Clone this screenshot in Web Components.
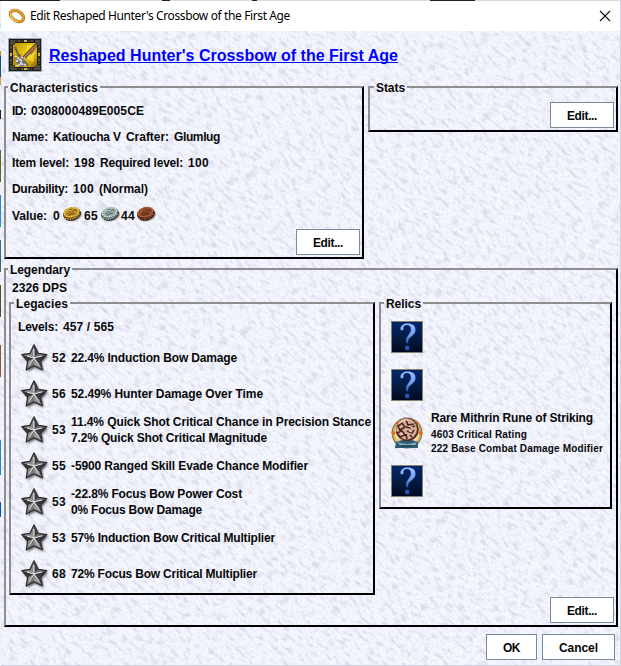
<!DOCTYPE html>
<html lang="en"><head><meta charset="utf-8"><title>Edit Reshaped Hunter's Crossbow of the First Age</title>
<style>html,body{margin:0;height:100%;overflow:hidden}body{font:bold 12px/16px "Liberation Sans",Arial,sans-serif;color:#080808}</style></head>
<body><item-dialog></item-dialog>
<script>
const define = (name, html, ready) => customElements.define(name, class extends HTMLElement {
  connectedCallback() {
    if (this.shadowRoot) return;
    const t = document.createElement('template');
    t.innerHTML = typeof html === 'function' ? html(this) : html;
    this.attachShadow({mode:'open'}).append(t.content.cloneNode(true));
    if (ready) ready(this);
  }
});

/* One line of text, tracked so that it spans the width given in "w". */
define('fit-text', '<style>:host{display:block;white-space:pre;height:16px}span{display:inline-block}</style><span><slot></slot></span>', el => {
  const w = +el.getAttribute('w'), s = el.shadowRoot.querySelector('span');
  if (w) s.style.letterSpacing = ((w - s.getBoundingClientRect().width) / el.textContent.length) + 'px';
});

/* Labels and values on one line. */
define('field-line', '<style>:host{display:flex;gap:5px;height:16px}</style><slot></slot>');

define('paper-texture', `<style>:host{position:absolute;inset:0;overflow:hidden;background:#f6f6ff}svg{display:block}</style>
<svg width="619" height="634" viewBox="0 0 619 634"><defs>
<filter id="a" x="0" y="0" width="1" height="1" color-interpolation-filters="sRGB"><feTurbulence type="fractalNoise" baseFrequency=".11 .27" numOctaves="3" seed="8"/><feColorMatrix values="0 0 0 0 .78  0 0 0 0 .78  0 0 0 0 .86  3.4 0 0 0 -1.68"/></filter>
<filter id="b" x="0" y="0" width="1" height="1" color-interpolation-filters="sRGB"><feTurbulence type="fractalNoise" baseFrequency=".4" numOctaves="2" seed="3"/><feColorMatrix values="0 0 0 0 .83  0 0 0 0 .88  0 0 0 0 .92  0 2.6 0 0 -1.15"/></filter></defs>
<rect width="619" height="634" filter="url(#b)" opacity=".5"/>
<g transform="rotate(42 310 317)"><rect x="-160" y="-160" width="940" height="960" filter="url(#a)" opacity=".55"/></g></svg>`);

define('ring-icon', `<style>:host{display:block;width:18px;height:18px}svg{display:block}</style><svg width="18" height="18" viewBox="0 0 18 18"><g transform="rotate(32 9 9)" fill="none"><ellipse cx="9" cy="9" rx="7.2" ry="4.8" stroke="#a96b12" stroke-width="3.2"/><ellipse cx="9" cy="8.7" rx="7" ry="4.9" stroke="#e0a032" stroke-width="2.2"/><path d="M2.2 10c1 4 6 5.8 10 3.8" stroke="#f8d778" stroke-width="1.2"/></g></svg>`);

define('bow-icon', `<style>:host{display:block;width:34px;height:34px}svg{display:block}</style><svg width="34" height="34" viewBox="0 0 34 34">
<defs><linearGradient id="g" x2="1" y2="1"><stop stop-color="#b98f08"/><stop offset=".5" stop-color="#f1cf10"/><stop offset="1" stop-color="#ac7c07"/></linearGradient></defs>
<path fill="#9aabb4" d="M0 0h34v34H0z"/><path fill="#201a14" d="M1 1h32v32H1z"/><path fill="none" stroke="#827a6c" stroke-width="1.2" stroke-dasharray="3 1.5 1 1" d="M3 3h28v28H3z"/>
<path fill="url(#g)" d="M5 5h24v24H5z"/><path fill="#fff04a" d="M19 7l9 1-3 16-7-4z" opacity=".55"/><path fill="#957208" d="M5 17l9-1-7 13H5zM22 28l7-7v8z" opacity=".6"/>
<g fill="#d0b34a"><path d="M16 2h3v2h-3zM16 30h3v2h-3zM2 15h2v3H2zM30 15h2v3h-2z"/></g>
<g fill="#4b463d"><path d="M2 2h5v5H2zM27 2h5v5h-5zM2 27h5v5H2zM27 27h5v5h-5z"/></g>
<path d="M10 26L28 7" stroke="#5b4024" stroke-width="3.6"/><path d="M11 25L28 7" stroke="#b18a56" stroke-width="1.8"/><path d="M21 14l6-6 1 3-5 6z" fill="#a9683a"/>
<path d="M7 9l3 7 5 5 5 7" fill="none" stroke="#6b6350" stroke-width="2"/><path d="M7 19l4 1 4 1 4 3-2 4-6 1-3-4z" fill="#77736b"/><path d="M7 18l3 2-1 3 4-2 1 3-3 3 5-1 3 2M13 19l4 2" fill="none" stroke="#e6e4e2" stroke-width="1.6" stroke-dasharray="2 1"/></svg>`);

define('coin-icon', el => `<style>:host{display:block;width:20px;height:17px}svg{display:block}</style><svg width="20" height="17" viewBox="0 0 20 17"><g transform="rotate(-14 10 8)">
<ellipse cx="10.8" cy="10.8" rx="8.8" ry="5.8" fill="#777480" opacity=".5"/><ellipse cx="9.8" cy="9.4" rx="9" ry="6.2" fill="#38271c"/><ellipse cx="9.6" cy="8.6" rx="8.7" ry="5.9" fill="${el.getAttribute('dark')}"/>
<ellipse cx="9.7" cy="7.1" rx="8.2" ry="5.1" fill="${el.getAttribute('mid')}"/><ellipse cx="9.7" cy="7.1" rx="7.2" ry="4.3" fill="none" stroke="${el.getAttribute('light')}" stroke-width="1.1" stroke-dasharray="1.4 1"/>
<path d="M5 8l3-2 2 1 3-2 2 2M6 9.6l4-1 3 1M8 4.5h4" fill="none" stroke="${el.getAttribute('dark')}" stroke-width="1"/><path d="M5 7l3-2 2 1 3-2" fill="none" stroke="${el.getAttribute('light')}" stroke-width=".7"/><path d="M2 11.4q7 5 15-1" fill="none" stroke="${el.getAttribute('light')}" stroke-dasharray="1 1.5"/></g></svg>`);

define('star-icon', `<style>:host{display:block;width:28px;height:30px}svg{display:block}</style><svg width="28" height="30" viewBox="0 0 28 30"><defs><filter id="s" x="-.2" y="-.2" width="1.5" height="1.5"><feGaussianBlur stdDeviation="1.2"/></filter></defs>
<path d="M13 1l4 8.5 9 1.2-6.3 6.5 1.8 9-8.5-4-8 4.2 1.5-9L.5 10.6l8.5-1.1z" fill="#44444c" opacity=".8" transform="translate(1.3 1.6)" filter="url(#s)"/>
<path d="M13 .8l4 8.5 8.8 1.3-6.2 6.4 1.7 8.8-8.3-4-7.8 4.2 1.4-9L.7 10.6 9 9.3z" fill="#5a5a5c" stroke="#29292a" stroke-width="1.2" stroke-linejoin="round"/>
<path d="M13 2v12L9.7 10zM2 11.2L9.7 10 13 14zM6.3 24.8l1.1-8L13 14z" fill="#8f8f91"/><path d="M13 2l3.4 8-3.4 4zM13 14l6.2 2.8 1.4 7.8z" fill="#3f3f41"/><path d="M13 14l3.3-4 8.2 1.3zM13 14v7l-6.7 3.8z" fill="#737375"/><path d="M13 14l11.5-2.7-5.3 5.5zM13 14l-5.6 2.7L2 11.2z" fill="#363638"/><path d="M13 14l7.6 10.6L13 21z" fill="#99999b"/>
<path d="M13 5v9L6 12.1M13 14l8-2.1M13 14l5.4 7.5M13 14l-4.8 7.6" fill="none" stroke="#e9e9ea" stroke-width="1"/></svg>`);

define('empty-relic', `<style>:host{display:grid;place-items:center;box-sizing:border-box;width:32px;height:32px;border:1px solid #85836a;background:linear-gradient(#03266a,#041b46 50%,#020b20)}svg{display:block}</style>
<svg width="30" height="30" viewBox="0 0 30 30"><defs><linearGradient id="q" x2="0" y2="1"><stop stop-color="#9bc2ff"/><stop offset=".6" stop-color="#6a9bf0"/><stop offset="1" stop-color="#2558b4"/></linearGradient></defs>
<path fill="url(#q)" d="M8.4 7.2C8.6 3.4 11.8 1.6 15.5 1.6c4.9 0 8 2.2 8 6.2 0 3.4-2.4 5.2-4.7 7.1-2.1 1.8-3 3.2-2.6 6.4h-1.7c-1.1-3.5.1-5.7 1.6-7.7 1.5-2 2.8-3.4 2.8-6 0-2.8-1.3-4.5-3.9-4.5-2.3 0-3.8 1-3.5 2.8.2 1.4-.3 2.5-1.6 2.5-.9 0-1.5-.5-1.5-1.2z"/><circle cx="15.2" cy="25.9" r="2.3" fill="#2159b8"/></svg>`);

define('rune-icon', `<style>:host{display:block;width:32px;height:32px}svg{display:block}</style><svg width="32" height="32" viewBox="0 0 32 32">
<circle cx="16" cy="16" r="15.4" fill="#806a45"/><circle cx="16" cy="16" r="14.4" fill="#d0ab55"/><circle cx="16" cy="16" r="12.6" fill="#ead89a"/><g fill="#e96a20"><circle cx="2.4" cy="16" r="2"/><circle cx="29.6" cy="16" r="2"/><circle cx="6" cy="6" r="1.5"/><circle cx="26" cy="6" r="1.5"/></g>
<path d="M4 31l1-6 6-2h10l6 2v6H4z" fill="#315b73"/><path d="M6 25q10 4 20 0l-2 3H9z" fill="#87b5c3"/><path d="M10 29h12" stroke="#244a5c" stroke-width="2"/>
<circle cx="16.3" cy="12.7" r="11.4" fill="#512e24"/><circle cx="15.6" cy="12" r="10.4" fill="#d6ac99"/><g fill="none" stroke="#4a241c" stroke-width="1.6"><path d="M7 9l4-3 3 4-5 3zM15 3l2 5 6-1M15 10l4 1 5-2M6 16l5-2 3 4-5 2zM16 14l5 2 2-3M15 17l1 5M19 18l2 2"/></g><path d="M8 7q4-5 9-4M18 9l4 2M9 16l3 1M18 14l3 1" fill="none" stroke="#f4d3c2" stroke-width="1.2"/></svg>`);

define('bevel-button', '<style>:host{display:grid;place-items:center;box-sizing:border-box;height:26px;border:1px solid #7a8a99;background:#fff;flex:none}::slotted(*){transform:translateY(1px)}</style><slot></slot>');

define('bevel-panel', el => `<style>:host{display:block;position:relative;box-sizing:border-box;border-style:solid;border-width:2px;border-color:#8e8e8e #000 #000 #8e8e8e}
.legend{position:absolute;top:-8px;left:${el.getAttribute('inset')||2}px;height:16px;padding:0 2px;overflow:hidden;isolation:isolate}.legend paper-texture{z-index:-1}</style><div class="legend"><paper-texture></paper-texture><fit-text w="${el.getAttribute('w')}">${el.getAttribute('label')}</fit-text></div><slot></slot>`);

define('legacy-row', el => {
  const lines = el.getAttribute('lines').split('|').map(l => { const [t,w] = l.split('@'); return `<fit-text w="${w}">${t}</fit-text>`; }).join('');
  return `<style>:host{display:grid;grid-template-columns:31px 19px 1fr;align-items:center;height:36px}star-icon{margin-top:1px}</style><star-icon></star-icon><fit-text w="14">${el.getAttribute('level')}</fit-text><div>${lines}</div>`;
});

define('item-dialog', `<style>
:host{display:block;box-sizing:border-box;width:621px;height:666px;padding:1px 1px 1px;background:
linear-gradient(90deg,#222 60px,#d9dbe8 60px 162px,#222 162px 170px,#d9dbe8 170px 252px,#222 252px 257px,#dadbe3 257px 430px,#222 430px 475px,#d7d9e4 475px) top/100% 1px no-repeat,
linear-gradient(#eef 0 23px,#aee 23px 28px,#eef 28px 51px,#c58919 51px 56px,#155273 56px 77px,#c5a536 77px 85px,#eef 85px 110px,#222 110px 119px,#eef 119px 150px,#5b6829 150px 182px,#eef 182px 195px,#2592bb 195px 227px,#eef 227px 240px,#396a83 240px 272px,#eef 272px 285px,#4b5526 285px 317px,#eef 317px 345px,#91572b 345px 377px,#eef 377px 440px,#2786c5 440px 475px,#eef 475px 502px,#075bb5 502px 517px,#eef 517px) left/1px 100% no-repeat,#d1d3df}
header{height:30px;background:#fff;display:flex;align-items:center;box-sizing:border-box;padding:0 8px 0 7px;font:12px/16px "Noto Sans","Open Sans",sans-serif;color:#000}
header fit-text{margin-left:4px}header svg{margin-left:auto}
main{position:relative;height:634px;box-sizing:border-box;padding:7px 2px 0 3px;isolation:isolate}
main>paper-texture{z-index:-1}
.title{display:flex;align-items:flex-start;gap:7px;height:48px;padding-left:4px;color:#00f;font-size:16px}.title a{display:block;color:#00f;border-bottom:1px solid #00f;width:349px;height:14px;padding-top:10px}
.top{display:flex;align-items:flex-start;gap:4px}
.char{width:360px;height:173px;padding:15px 6px}.char>field-line{margin-bottom:10px}
.value{display:flex;align-items:center;margin-top:1px;height:16px}.value coin-icon{margin-top:-3px}
.value fit-text{transform:translateY(1px)}
.char bevel-button{width:64px;margin:6px -4px 0 auto}
.stats{width:250px;height:46px;padding:14px 2px}.stats bevel-button{width:64px;margin-left:auto}
.leg{width:614px;height:359px;margin-top:9px;padding:10px 2px 0 3px}.dps{margin-left:3px}
.cols{display:flex;gap:4px;align-items:flex-start;margin-top:6px}
.legacies{width:366px;height:293px;padding:15px 0 0 10px;margin-top:0}.levels{margin:0 0 5px -3px}
.relics{width:233px;height:207px;padding:17px 0 0 10px}.slot{display:flex;height:48px;gap:8px}.slot>div{margin-top:-7px;line-height:16px}.small{font-size:10px;padding-top:1px}.small fit-text{height:14px}
.leg>bevel-button{width:64px;margin:2px 0 0 auto}
footer{display:flex;justify-content:flex-end;gap:5px;margin-top:7px;padding-right:3px}
</style>
<header><ring-icon></ring-icon><fit-text w="260">Edit Reshaped Hunter's Crossbow of the First Age</fit-text><svg width="14" height="14" viewBox="0 0 14 14"><path d="M2 2l10 10M12 2L2 12" stroke="#111" stroke-width="1.1"/></svg></header>
<main><paper-texture></paper-texture>
<div class="title"><bow-icon></bow-icon><a><fit-text w="349">Reshaped Hunter's Crossbow of the First Age</fit-text></a></div>
<div class="top"><bevel-panel class="char" label="Characteristics" w="88"><field-line><fit-text w="14">ID:</fit-text><fit-text w="113">0308000489E005CE</fit-text></field-line><field-line><fit-text w="36">Name:</fit-text><fit-text w="68">Katioucha V</fit-text><fit-text w="43">Crafter:</fit-text><fit-text w="46">Glumlug</fit-text></field-line><field-line><fit-text w="57">Item level:</fit-text><fit-text w="21">198</fit-text><fit-text w="83">Required level:</fit-text><fit-text w="21">100</fit-text></field-line><field-line><fit-text w="56">Durability:</fit-text><fit-text w="21">100</fit-text><fit-text w="49">(Normal)</fit-text></field-line>
<div class="value"><fit-text w="35">Value:</fit-text><fit-text w="7" style="margin:0 2px 0 6px">0</fit-text><coin-icon dark="#745116" mid="#bd9127" light="#f4df65"></coin-icon><fit-text w="14" style="margin:0 2px">65</fit-text><coin-icon dark="#526968" mid="#9dabaa" light="#dceae5"></coin-icon><fit-text w="14" style="margin:0 1px">44</fit-text><coin-icon dark="#532719" mid="#8e4728" light="#c47a43"></coin-icon></div>
<bevel-button><fit-text w="30">Edit...</fit-text></bevel-button></bevel-panel>
<bevel-panel class="stats" label="Stats" inset="4" w="29"><bevel-button><fit-text w="30">Edit...</fit-text></bevel-button></bevel-panel></div>
<bevel-panel class="leg" label="Legendary" w="60"><fit-text class="dps" w="55">2326 DPS</fit-text><div class="cols">
<bevel-panel class="legacies" label="Legacies" inset="3" w="52"><field-line class="levels"><fit-text w="40">Levels:</fit-text><fit-text w="51">457 / 565</fit-text></field-line>
<legacy-row level="52" lines="22.4% Induction Bow Damage@166"></legacy-row><legacy-row level="56" lines="52.49% Hunter Damage Over Time@192"></legacy-row><legacy-row level="53" lines="11.4% Quick Shot Critical Chance in Precision Stance@300|7.2% Quick Shot Critical Magnitude@196"></legacy-row><legacy-row level="55" lines="-5900 Ranged Skill Evade Chance Modifier@237"></legacy-row><legacy-row level="53" lines="-22.8% Focus Bow Power Cost@171|0% Focus Bow Damage@131"></legacy-row><legacy-row level="53" lines="57% Induction Bow Critical Multiplier@204"></legacy-row><legacy-row level="68" lines="72% Focus Bow Critical Multiplier@186"></legacy-row></bevel-panel>
<bevel-panel class="relics" label="Relics" inset="3" w="35"><div class="slot"><empty-relic></empty-relic></div><div class="slot"><empty-relic></empty-relic></div><div class="slot"><rune-icon></rune-icon><div><fit-text w="162">Rare Mithrin Rune of Striking</fit-text><div class="small"><fit-text w="96">4603 Critical Rating</fit-text><fit-text w="172">222 Base Combat Damage Modifier</fit-text></div></div></div><div class="slot"><empty-relic></empty-relic></div></bevel-panel>
</div><bevel-button><fit-text w="30">Edit...</fit-text></bevel-button></bevel-panel>
<footer><bevel-button style="width:51px"><fit-text w="17">OK</fit-text></bevel-button><bevel-button style="width:73px"><fit-text w="39">Cancel</fit-text></bevel-button></footer>
</main>`);
</script></body></html>
